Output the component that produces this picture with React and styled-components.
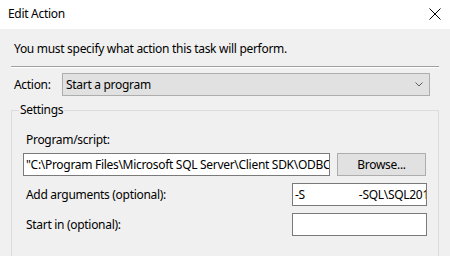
import React from "react";
import styled, { createGlobalStyle } from "styled-components";

const GlobalStyle = createGlobalStyle`
  html, body {
    margin: 0;
    padding: 0;
    background: #f0f0f0;
  }
  body {
    font-family: "Segoe UI", "Noto Sans", "Liberation Sans", sans-serif;
    font-size: 12px;
    letter-spacing: -0.3px;
    color: #000000;
  }
`

const Window = styled.div`
  width: 450px;
  height: 256px;
  overflow: hidden;
  display: flex;
  flex-direction: column;
  background: #f0f0f0;
`
const TitleBar = styled.div`
  height: 29px;
  flex-shrink: 0;
  background: #ffffff;
  display: flex;
  align-items: center;
  justify-content: space-between;
  padding: 0 8px 0 8px;
  box-sizing: border-box;
`
const Title = styled.div`
  font-size: 12px;
  line-height: 16px;
  margin-top: -2px;
`
const CloseButton = styled.div`
  width: 12px;
  height: 12px;
  margin-right: 1px;
  display: flex;
  margin-top: -2px;
`
const Body = styled.div`
  display: flex;
  flex-direction: column;
  padding: 0 11px;
`
const Intro = styled.div`
  margin-top: 12px;
  padding-left: 3px;
  line-height: 16px;
`
const Separator = styled.div`
  margin-top: 9px;
  height: 1px;
  background: #a0a0a0;
  border-bottom: 1px solid #ffffff;
`
const ActionRow = styled.div`
  margin-top: 5px;
  display: flex;
  align-items: center;
`
const ActionLabel = styled.div`
  width: 48px;
  padding-left: 3px;
  line-height: 16px;
`
const Select = styled.div`
  width: 368px;
  height: 23px;
  box-sizing: border-box;
  background: #e1e1e1;
  border: 1px solid #adadad;
  display: flex;
  align-items: center;
  justify-content: space-between;
  padding: 0 6px 0 3px;
  line-height: 16px;
`
const GroupBox = styled.fieldset`
  margin: 6px 0 0 0;
  border: 1px solid #dcdcdc;
  padding: 14px 11px 40px 11px;
  min-width: 0;
`
const Legend = styled.legend`
  margin-left: -4px;
  padding: 0 1px;
  line-height: 16px;
`
const FieldLabel = styled.div`
  padding-left: 3px;
  line-height: 16px;
`
const ProgramRow = styled.div`
  margin-top: 5px;
  display: flex;
  align-items: center;
  gap: 7px;
`
const OptionRow = styled.div`
  margin-top: 7px;
  display: flex;
  align-items: center;
  justify-content: space-between;
`
const TextBox = styled.div`
  width: ${(p) => p.$width}px;
  height: 23px;
  flex-shrink: 0;
  box-sizing: border-box;
  background: #ffffff;
  border: 1px solid #7a7a7a;
  padding: 0 2px;
  white-space: pre;
  overflow: hidden;
  line-height: 21px;
`
const Gap = styled.span`
  display: inline-block;
  width: ${(p) => p.$width}px;
`
const Button = styled.div`
  width: 89px;
  height: 23px;
  box-sizing: border-box;
  background: #e1e1e1;
  border: 1px solid #adadad;
  display: flex;
  align-items: center;
  justify-content: center;
  line-height: 16px;
`

export default function App() {
  return (
    <Window>
      <GlobalStyle />
      <TitleBar>
        <Title>Edit Action</Title>
        <CloseButton>
          <svg width="12" height="12" viewBox="0 0 12 12">
            <path d="M0.5 0.5 L11.5 11.5 M11.5 0.5 L0.5 11.5" stroke="#000" strokeWidth="1" fill="none" />
          </svg>
        </CloseButton>
      </TitleBar>
      <Body>
        <Intro>You must specify what action this task will perform.</Intro>
        <Separator />
        <ActionRow>
          <ActionLabel>Action:</ActionLabel>
          <Select>
            <span>Start a program</span>
            <svg width="8" height="5" viewBox="0 0 8 5">
              <path d="M0.5 0.5 L4 4 L7.5 0.5" stroke="#606060" strokeWidth="1" fill="none" />
            </svg>
          </Select>
        </ActionRow>
        <GroupBox>
          <Legend>Settings</Legend>
          <FieldLabel>Program/script:</FieldLabel>
          <ProgramRow>
            <TextBox $width={307}>"C:\Program Files\Microsoft SQL Server\Client SDK\ODBC\170\Tools\Binn\SQLCMD.EXE"</TextBox>
            <Button>Browse...</Button>
          </ProgramRow>
          <OptionRow>
            <FieldLabel>Add arguments (optional):</FieldLabel>
            <TextBox $width={135}>-S<Gap $width={54} />-SQL\SQL2019 -i</TextBox>
          </OptionRow>
          <OptionRow>
            <FieldLabel>Start in (optional):</FieldLabel>
            <TextBox $width={135} />
          </OptionRow>
        </GroupBox>
      </Body>
    </Window>
  );
}
